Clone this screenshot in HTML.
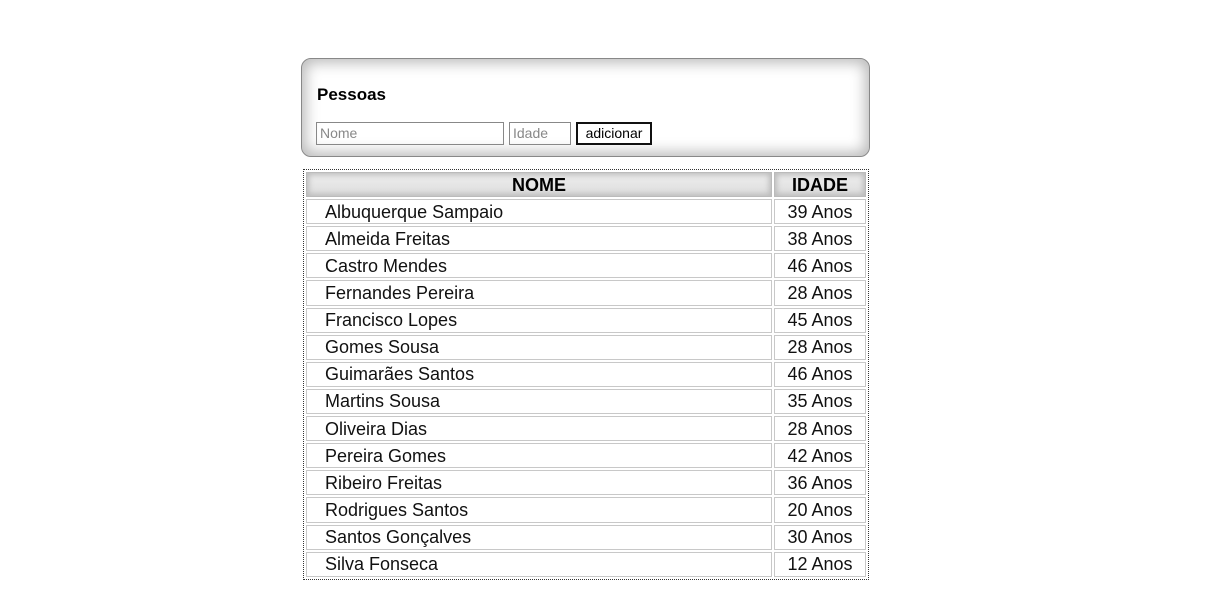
<!DOCTYPE html>
<html><head><meta charset="utf-8"><style>
body{margin:0;background:#fff;font-family:"Liberation Sans",Arial,sans-serif;}
.card{position:absolute;left:301px;top:58px;width:567px;height:97px;border:1px solid #888;border-radius:10px;box-shadow:inset 0 0 14px 4px #bbb;background:#fff;}
.card h3{position:absolute;left:15px;top:26px;margin:0;font-size:17px;font-weight:bold;color:#000;}
.in{position:absolute;top:63px;border:1px solid #888;box-sizing:border-box;height:23px;font-size:14px;color:#888;padding:2px 3px;line-height:17px;}
.btn{position:absolute;left:274px;top:63px;width:76px;height:23px;box-sizing:border-box;border:2px solid #111;font-size:14px;text-align:center;line-height:19px;color:#000;background:#fff;}
table{position:absolute;left:303px;top:169px;width:566px;border:1px dotted #333;border-spacing:2px;box-sizing:border-box;}
td,th{border:1px solid #c8c8c8;font-size:18px;color:#111;padding:0;height:23.14px;line-height:20px;}
th{font-weight:bold;text-align:center;color:#000;background:linear-gradient(#eee,#ddd);box-shadow:inset 0 0 6px 2px #bbb;height:23px;line-height:18px;border-color:#bbb;}
td.n{padding-left:18px;}
td.a{text-align:center;width:90px;}
</style></head><body>
<div class="card"><h3>Pessoas</h3>
<div class="in" style="left:14px;width:188px;">Nome</div>
<div class="in" style="left:207px;width:62px;">Idade</div>
<div class="btn">adicionar</div></div>
<table>
<tr><th>NOME</th><th>IDADE</th></tr>
<tr><td class="n">Albuquerque Sampaio</td><td class="a">39 Anos</td></tr>
<tr><td class="n">Almeida Freitas</td><td class="a">38 Anos</td></tr>
<tr><td class="n">Castro Mendes</td><td class="a">46 Anos</td></tr>
<tr><td class="n">Fernandes Pereira</td><td class="a">28 Anos</td></tr>
<tr><td class="n">Francisco Lopes</td><td class="a">45 Anos</td></tr>
<tr><td class="n">Gomes Sousa</td><td class="a">28 Anos</td></tr>
<tr><td class="n">Guimarães Santos</td><td class="a">46 Anos</td></tr>
<tr><td class="n">Martins Sousa</td><td class="a">35 Anos</td></tr>
<tr><td class="n">Oliveira Dias</td><td class="a">28 Anos</td></tr>
<tr><td class="n">Pereira Gomes</td><td class="a">42 Anos</td></tr>
<tr><td class="n">Ribeiro Freitas</td><td class="a">36 Anos</td></tr>
<tr><td class="n">Rodrigues Santos</td><td class="a">20 Anos</td></tr>
<tr><td class="n">Santos Gonçalves</td><td class="a">30 Anos</td></tr>
<tr><td class="n">Silva Fonseca</td><td class="a">12 Anos</td></tr>
</table>
</body></html>
